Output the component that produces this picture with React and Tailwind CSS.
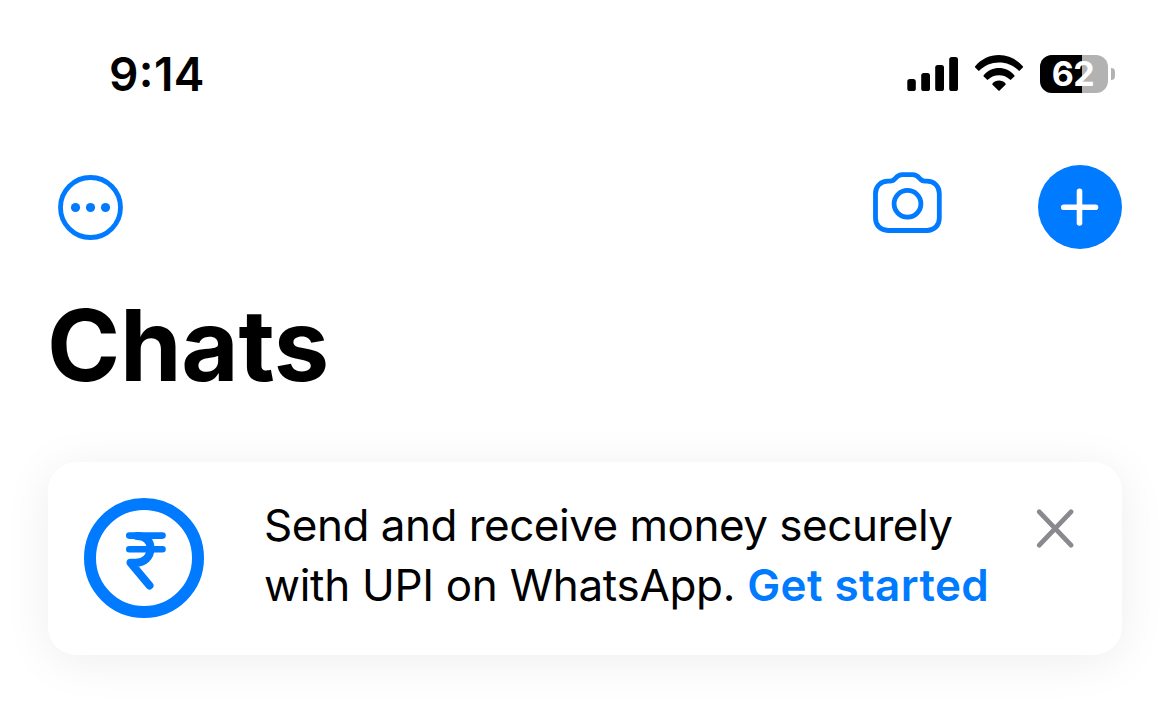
import { useState } from "react";

const SignalIcon = () => (
  <svg width="52" height="36" viewBox="0 0 52 36" fill="black">
    <rect x="0.3" y="23" width="8.5" height="12" rx="2.6" />
    <rect x="14.2" y="17" width="8.8" height="18" rx="2.6" />
    <rect x="28.2" y="9" width="8.8" height="26" rx="2.6" />
    <rect x="42.2" y="1" width="8.8" height="34" rx="2.6" />
  </svg>
);

const WifiIcon = () => (
  <svg width="50" height="38" viewBox="0 0 50 38" fill="black">
    <path d="M1.2 11.2C7.5 4 15.8 0.1 25 0.1S42.5 4 48.8 11.2Q49.4 11.9 48.8 12.5L45.8 15.6Q45.2 16.2 44.6 15.6C39.4 10.4 32.7 7.5 25 7.5S10.6 10.4 5.4 15.6Q4.8 16.2 4.2 15.6L1.2 12.5Q0.6 11.9 1.2 11.2Z" />
    <path d="M9.7 20.2C13.9 15.5 19.2 13 25 13S36.1 15.5 40.3 20.2Q40.9 20.9 40.3 21.5L37.1 24.6Q36.5 25.2 35.9 24.6C32.9 21.7 29.2 20.2 25 20.2S17.1 21.7 14.1 24.6Q13.5 25.2 12.9 24.6L9.7 21.5Q9.1 20.9 9.7 20.2Z" />
    <path d="M18.5 28.4C20.3 26.4 22.5 25.6 25 25.6S29.7 26.4 31.5 28.4Q32.1 29.1 31.5 29.7L25.6 35.6Q25 36.2 24.4 35.6L18.5 29.7Q17.9 29.1 18.5 28.4Z" />
  </svg>
);

const Battery = ({ level }) => (
  <div className="flex items-center gap-[3px]">
    <div className="relative flex h-[38px] w-[68px] items-center justify-center rounded-[12px] bg-[#b2b2b2]">
      <div
        className="absolute inset-y-0 left-0 rounded-l-[12px] bg-black"
        style={{ width: `${level}%` }}
      />
      <span className="relative right-px text-[34px] leading-none font-bold tracking-[-0.5px] text-white">
        {level}
      </span>
    </div>
    <div className="h-[12px] w-[4px] rounded-r-full bg-[#b2b2b2]" />
  </div>
);

const MoreIcon = () => (
  <svg width="66" height="66" viewBox="0 0 66 66" fill="none">
    <circle cx="33.5" cy="33.5" r="30" stroke="#007aff" strokeWidth="4.8" />
    <circle cx="18.5" cy="33.5" r="4.6" fill="#007aff" />
    <circle cx="33.5" cy="33.5" r="4.6" fill="#007aff" />
    <circle cx="48.5" cy="33.5" r="4.6" fill="#007aff" />
  </svg>
);

const CameraIcon = () => (
  <svg
    width="70"
    height="62"
    viewBox="0 0 70 62"
    fill="none"
    stroke="#007aff"
    strokeWidth="4.8"
  >
    <path d="M16 9.2H18C20.5 9.2 21.8 8.2 23.5 6.2C25.5 3.6 27.5 2.6 30.5 2.6H40.5C43.5 2.6 45.5 3.6 47.5 6.2C49.2 8.2 50.5 9.2 53 9.2H55C62.2 9.2 67.3 14.3 67.3 21.5V46.2C67.3 53.4 62.2 58.5 55 58.5H16C8.8 58.5 3.5 53.4 3.5 46.2V21.5C3.5 14.3 8.8 9.2 16 9.2Z" />
    <circle cx="35.5" cy="31.8" r="13.4" />
  </svg>
);

const PlusIcon = () => (
  <svg
    width="38"
    height="38"
    viewBox="0 0 38 38"
    stroke="white"
    strokeWidth="5.6"
    strokeLinecap="round"
  >
    <path d="M18.5 3.2V35M2.7 19.3H34.5" />
  </svg>
);

const RupeeIcon = () => (
  <svg
    width="120"
    height="120"
    viewBox="0 0 120 120"
    fill="none"
    stroke="#007aff"
    strokeLinecap="round"
    strokeLinejoin="round"
  >
    <circle cx="60" cy="60" r="54" strokeWidth="12" />
    <path d="M45.3 37.6H78.5M45.3 51.2H78.5" strokeWidth="6.6" />
    <path
      d="M53 38C62 38 66.5 43 66.5 50.5C66.5 59 60 64.8 52 64.8H46.5L65.5 87.5"
      strokeWidth="8"
    />
  </svg>
);

const CloseIcon = () => (
  <svg
    width="38"
    height="40"
    viewBox="0 0 38 40"
    stroke="#8a8a8e"
    strokeWidth="4.8"
    strokeLinecap="round"
  >
    <path d="M3.3 3.8L35 37.2M35 3.8L3.3 37.2" />
  </svg>
);

const StatusBar = () => (
  <div className="flex h-[46px] items-center justify-between pr-[54px] pl-[109px]">
    <span className="text-[46px] leading-[46px] font-semibold tracking-[0.4px]">
      9<span className="relative bottom-[4px]">:</span>14
    </span>
    <div className="flex items-center">
      <SignalIcon />
      <div className="ml-[15px]">
        <WifiIcon />
      </div>
      <div className="ml-4">
        <Battery level={62} />
      </div>
    </div>
  </div>
);

const PaymentBanner = ({ onClose }) => (
  <div className="mt-[61px] mr-[47px] ml-12 flex h-[193px] items-start rounded-[28px] bg-white pt-[33px] pl-9 shadow-[0_6px_48px_rgba(0,0,0,0.07)]">
    <div className="mt-[3px]">
      <RupeeIcon />
    </div>
    <p className="ml-[60px] w-[750px] text-[44px] leading-[60px] whitespace-nowrap">
      <span className="tracking-[-0.5px]">Send and receive money securely</span>
      <br />
      <span className="tracking-[-0.3px]">with UPI on WhatsApp. </span>
      <button className="font-semibold tracking-[0.4px] text-[#007aff]">
        Get started
      </button>
    </p>
    <button className="mt-[13px] ml-[22px]" onClick={onClose}>
      <CloseIcon />
    </button>
  </div>
);

const App = () => {
  const [showBanner, setShowBanner] = useState(true);

  return (
    <div className="h-[713px] w-[1169px] overflow-hidden bg-white pt-[51px] font-['Inter',sans-serif] text-black">
      <StatusBar />

      {/* Toolbar */}
      <div className="mt-[68px] flex h-[84px] items-center justify-between pr-[47px] pl-[57px]">
        <button>
          <MoreIcon />
        </button>
        <div className="flex items-start">
          <button className="mt-[7px]">
            <CameraIcon />
          </button>
          <button className="ml-24 flex h-[84px] w-[84px] items-center justify-center rounded-full bg-[#007aff]">
            <PlusIcon />
          </button>
        </div>
      </div>

      <h1 className="mt-[46px] mb-[67px] ml-[47px] text-[99px] leading-[100px] font-bold tracking-[-0.3px]">
        Chats
      </h1>

      {showBanner && <PaymentBanner onClose={() => setShowBanner(false)} />}
    </div>
  );
};

export default App;
